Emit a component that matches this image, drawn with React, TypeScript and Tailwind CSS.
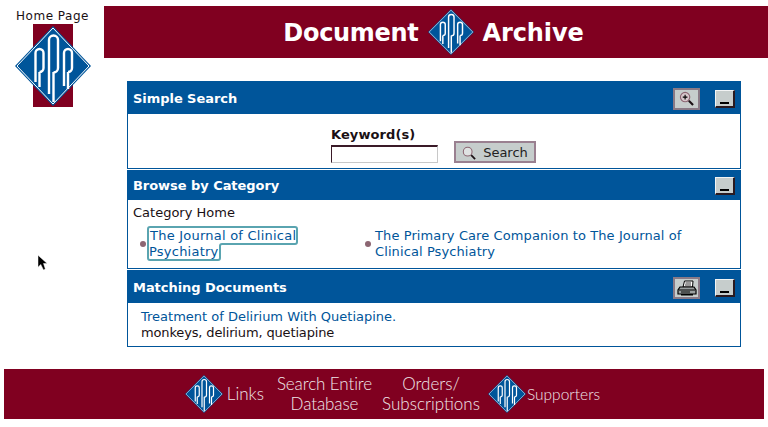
import type { ReactNode } from "react";

function PppMark({ className }: { className: string }) {
  return (
    <svg viewBox="0 0 76 80" preserveAspectRatio="none" className={className}>
      <polygon points="38,0 76,40 38,80 0,40" fill="#00559a" />
      <polyline points="38,2 74,40 38,78 2,40 38,2" fill="none" stroke="#ffffff" strokeWidth="1" />
      <g fill="none" stroke="#ffffff" strokeWidth="2.400">
        <path d="M20.500 56V27a4 4 0 0 1 8 0v15a4 4 0 0 1-4 4M24.500 46V61" />
        <path d="M34 68V14a4.500 4.500 0 0 1 9 0v28a4.500 4.500 0 0 1-4.500 4.500M38.500 46V76" />
        <path d="M49 44V27a4 4 0 0 1 8 0v15a4 4 0 0 1-4 4M53 46V63M49 44V60" />
      </g>
    </svg>
  );
}

function MinButton() {
  return (
    <button className="w-[20px] h-[18px] bg-[#c6cdcc] border-t border-l border-t-[#f2f4f4] border-l-[#f2f4f4] border-r-2 border-b-2 border-r-[#2a1a20] border-b-[#2a1a20] flex items-end justify-center pb-[2px]">
      <span className="block w-[9px] h-[2px] bg-black" />
    </button>
  );
}

function IconButton({ children }: { children: ReactNode }) {
  return (
    <button className="w-[27px] h-[22px] bg-[#c6cdcc] border-2 border-[#8a7a86] flex items-center justify-center">
      {children}
    </button>
  );
}

function Panel({
  title,
  headClass,
  actions,
  children,
}: {
  title: string;
  headClass: string;
  actions: ReactNode;
  children: ReactNode;
}) {
  return (
    <section className="border border-[#00559a]">
      <div className={`${headClass} bg-[#00559a] flex items-center justify-between pl-[5px] pr-[5px]`}>
        <h2 className="text-white font-bold text-[13px] tracking-[-0.05px]">{title}</h2>
        <div className="flex items-center gap-[15px]">{actions}</div>
      </div>
      {children}
    </section>
  );
}

function Bullet() {
  return <span className="shrink-0 w-[6px] h-[6px] rounded-full bg-[#8c6672]" />;
}

export default function App() {
  return (
    <div
      className="relative w-[768px] h-[427px] overflow-hidden bg-white text-[13px] leading-[16px] text-[#1a1014] pt-[6px]"
      style={{ fontFamily: '"DejaVu Sans", Verdana, sans-serif' }}
    >
      <div className="flex">
        {/* Left logo */}
        <div className="w-[104px] shrink-0 flex flex-col items-center pl-[2px]">
          <a className="text-[12px] leading-[16px] mt-[2px] tracking-[0.5px] text-center pr-[1px]">Home Page</a>
          <div className="relative w-[40px] h-[83px] bg-[#800020]">
            <PppMark className="absolute left-[-18px] top-[2px] w-[76px] h-[80px]" />
          </div>
        </div>

        <div className="flex-1">
          {/* Banner */}
          <div className="h-[52px] bg-[#800020] flex items-center justify-center gap-[9px] pr-[5px]">
            <span className="text-white font-bold text-[24px] tracking-[-0.3px] pt-[1px]">Document</span>
            <PppMark className="w-[46px] h-[46px]" />
            <span className="text-white font-bold text-[24px] tracking-[-0.1px] pt-[1px]">Archive</span>
          </div>

          {/* Panels */}
          <div className="ml-[23px] mr-[27px] mt-[23px] flex flex-col gap-[1px]">
            <Panel
              title="Simple Search"
              headClass="h-[32px] pt-[1px]"
              actions={
                <>
                  <IconButton>
                    <svg viewBox="0 0 16 16" className="w-[15px] h-[15px]">
                      <circle cx="6.500" cy="6.500" r="5" fill="#d8c8cc" stroke="#8c6672" strokeWidth="1.200" />
                      <path d="M4 6.500H9M6.500 4V9" stroke="#000000" strokeWidth="1.200" />
                      <path d="M10.500 10.500L15 15" stroke="#1a1014" strokeWidth="2.200" />
                    </svg>
                  </IconButton>
                  <MinButton />
                </>
              }
            >
              <div className="h-[54px] flex items-end justify-center gap-[16px] pb-[5px] pr-[3px] pl-[2px]">
                <div className="flex flex-col">
                  <label className="font-bold text-[13px] leading-[15px] tracking-[0.1px] mb-[3px]">Keyword(s)</label>
                  <input className="w-[107px] h-[18px] bg-white border-t-2 border-l border-t-[#3a1a28] border-l-[#3a1a28] border-r border-b border-r-[#c8c8c8] border-b-[#c8c8c8]" />
                </div>
                <button className="w-[82px] h-[22px] bg-[#c6cdcc] border-2 border-[#9a8090] flex items-center justify-center gap-[7px] text-[13px] text-[#222222] pt-[1px]">
                  <svg viewBox="0 0 16 16" className="w-[14px] h-[14px]">
                    <circle cx="6.500" cy="6.500" r="5" fill="#dfe2e2" stroke="#8c6672" strokeWidth="1.200" />
                    <path d="M10.500 10.500L15 15" stroke="#1a1014" strokeWidth="2" />
                  </svg>
                  Search
                </button>
              </div>
            </Panel>

            <Panel title="Browse by Category" headClass="h-[29px]" actions={<MinButton />}>
              <div className="h-[68px] px-[5px] pt-[5px]">
                <div>Category Home</div>
                <div className="flex mt-[7px] text-[#00559a]">
                  <div className="w-[232px] flex items-center gap-[3px] pl-[7px] shrink-0">
                    <Bullet />
                    <div className="w-[170px] tracking-[0.23px]">
                      <a className="outline-2 outline-[#5aa4b0] rounded-[1px] px-[1px]">The Journal of Clinical Psychiatry</a>
                    </div>
                  </div>
                  <div className="flex items-center gap-[4px]">
                    <Bullet />
                    <a className="w-[325px] tracking-[0.1px]">The Primary Care Companion to The Journal of Clinical Psychiatry</a>
                  </div>
                </div>
              </div>
            </Panel>

            <Panel
              title="Matching Documents"
              headClass="h-[32px] pt-[1px]"
              actions={
                <>
                  <IconButton>
                    <svg viewBox="0 0 20 16" className="w-[20px] h-[16px]">
                      <path d="M6 7L7.500 1H16L15.500 7Z" fill="#ffffff" stroke="#000000" />
                      <path d="M8.500 3H14M8 5H14" stroke="#000000" strokeWidth="0.800" />
                      <path d="M3 7H17L19 10V14H1V10Z" fill="#9aa0a0" stroke="#000000" strokeWidth="1.200" />
                      <path d="M2 10H18M4 12H13" stroke="#000000" />
                      <path d="M4 14H16V15.500H4Z" fill="#000000" />
                    </svg>
                  </IconButton>
                  <MinButton />
                </>
              }
            >
              <div className="h-[43px] px-[13px] pt-[6px]">
                <a className="block text-[#00559a]">Treatment of Delirium With Quetiapine.</a>
                <p className="tracking-[-0.15px]">monkeys, delirium, quetiapine</p>
              </div>
            </Panel>
          </div>
        </div>
      </div>

      {/* Footer */}
      <footer
        className="mx-[4px] mt-[22px] h-[50px] bg-[#800020] flex items-center justify-center gap-[10px] text-[17px] leading-[20px] text-[#f0e8ea] font-light pl-[17px]"
        style={{ fontFamily: 'Lato, "Open Sans", sans-serif' }}
      >
        <div className="flex items-center gap-[4px]">
          <PppMark className="w-[38px] h-[38px]" />
          <a>Links</a>
        </div>
        <a className="text-center ml-[3px] tracking-[-0.1px]">
          Search Entire
          <br />
          Database
        </a>
        <a className="text-center">
          Orders/
          <br />
          Subscriptions
        </a>
        <div className="flex items-center gap-[1px] -ml-[2px]">
          <PppMark className="w-[38px] h-[38px]" />
          <a className="text-[15.500px]">Supporters</a>
        </div>
      </footer>

      {/* Mouse pointer in the capture */}
      <svg viewBox="0 0 12 18" className="absolute left-[38px] top-[255px] w-[11px] h-[17px]">
        <path d="M0 0V13L3 10L6 16L8 15L6 9H10Z" fill="#000000" stroke="#ffffff" strokeWidth="0.500" />
      </svg>
    </div>
  );
}
